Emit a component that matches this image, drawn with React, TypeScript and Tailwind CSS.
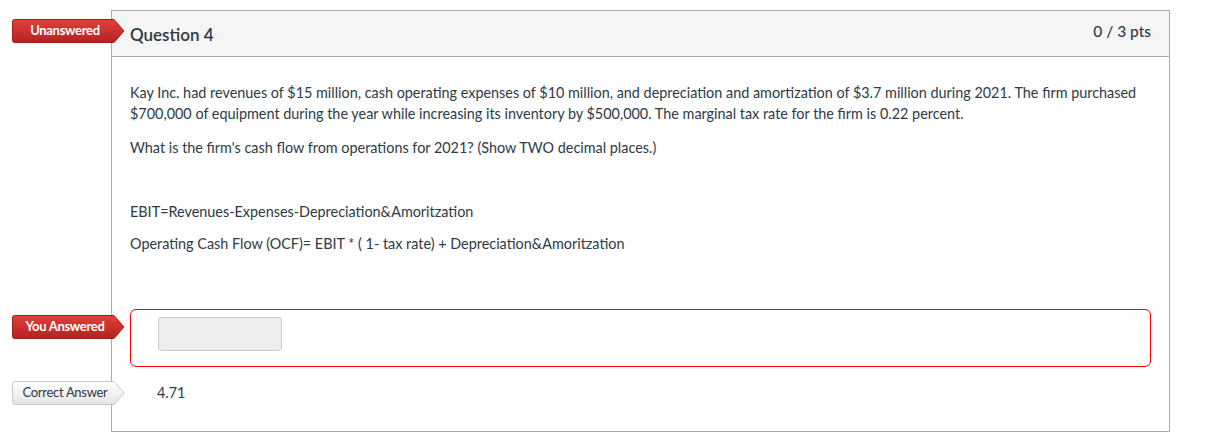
type TagProps = {
  label: string
  tone: 'red' | 'gray'
  pos: string
}

function Tag({ label, tone, pos }: TagProps) {
  const red = tone === 'red'
  return (
    <div className={`absolute ${pos} h-[24px] w-[113px]`}>
      <svg className="absolute inset-0" width="113" height="24" viewBox="0 0 113 24">
        <defs>
          <linearGradient id={`g-${tone}`} x1="0" y1="0" x2="0" y2="1">
            <stop offset="0" stopColor={red ? '#e2403b' : '#ffffff'} />
            <stop offset="1" stopColor={red ? '#b3221f' : '#e4e4e4'} />
          </linearGradient>
        </defs>
        <path
          d="M2.5 0.5 H102 L112 12 L102 23.5 H2.5 Q0.5 23.5 0.5 21.5 V2.5 Q0.5 0.5 2.5 0.5 Z"
          fill={`url(#g-${tone})`}
          stroke={red ? '#a81e1b' : '#c8c8c8'}
          strokeWidth="1"
        />
      </svg>
      <span
        className={[
          'relative flex h-full w-[106px] items-center justify-center text-[13px] tracking-[-0.3px]',
          red ? 'font-bold text-white' : 'text-[#2d3b45]',
        ].join(' ')}
      >
        {label}
      </span>
    </div>
  )
}

export default function App() {
  return (
    <div className="h-[445px] w-[1208px] bg-white pl-[111px] pt-[10px] font-['Lato','Open_Sans',sans-serif] text-[#2d3b45]">
      <div className="relative h-[422px] w-[1059px] border border-[#aaaaaa]">
        <div className="relative flex h-[46px] items-start justify-between border-b border-[#aaaaaa] bg-[#f5f5f5] pl-[18px] pr-[18px]">
          <Tag label="Unanswered" tone="red" pos="left-[-100px] top-[8px]" />
          <h2 className="mt-[14px] text-[17px] font-semibold leading-[20px]">Question 4</h2>
          <span className="mt-[11px] text-[15.5px] font-medium leading-[18px]">0 / 3 pts</span>
        </div>

        <div className="px-[18px] pt-[25px] text-[14.4px] leading-[21px]">
          <p>
            Kay Inc. had revenues of $15 million, cash operating expenses of $10 million, and depreciation and
            amortization of $3.7 million during 2021. The firm purchased $700,000 of equipment during the year while
            increasing its inventory by $500,000. The marginal tax rate for the firm is 0.22 percent.
          </p>
          <p className="mt-[13px]">What is the firm's cash flow from operations for 2021? (Show TWO decimal places.)</p>
          <p className="mt-[43px]">EBIT=Revenues-Expenses-Depreciation&amp;Amoritzation</p>
          <p className="mt-[11px]">Operating Cash Flow (OCF)= EBIT * ( 1- tax rate) + Depreciation&amp;Amoritzation</p>
        </div>

        <div className="relative mx-[18px] mt-[55px] flex h-[58px] w-[1021px] items-start rounded-[6px] border border-[#ff0000] pl-[27px] pt-[7px]">
          <Tag label="You Answered" tone="red" pos="left-[-119px] top-[5px]" />
          <div className="h-[34px] w-[124px] rounded-[3px] border border-[#cccccc] bg-[#eeeeee]" />
        </div>

        <div className="relative mx-[18px] mt-[14px] flex h-[24px] items-center pl-[27px]">
          <Tag label="Correct Answer" tone="gray" pos="left-[-118px] top-[0px]" />
          <span className="text-[14.4px]">4.71</span>
        </div>
      </div>
    </div>
  )
}
